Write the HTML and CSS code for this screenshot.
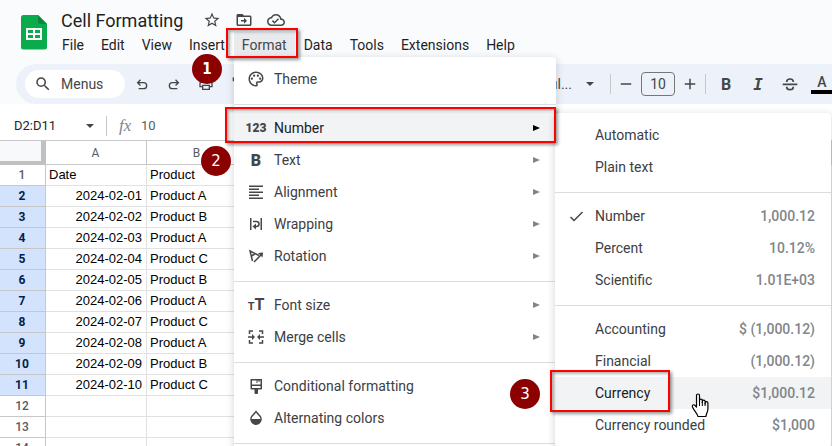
FILE: index.html
```html
<!DOCTYPE html>
<html lang="en">
<head>
  <meta charset="UTF-8">
  <meta name="viewport" content="width=device-width, initial-scale=1.0">
  <title>Cell Formatting</title>
  <link rel="stylesheet" href="styles.css">
</head>
<body>

  <!-- Header -->
  <header class="header">
    <svg class="logo" viewBox="0 0 26 35">
      <path fill="#0aab4c" d="M2.500 0H17l9 9v23a2.500 2.500 0 0 1-2.500 2.500h-21A2.500 2.500 0 0 1 0 32V2.500A2.500 2.500 0 0 1 2.500 0z"/>
      <path fill="#078a3c" d="M17 0l9 9h-6.500A2.500 2.500 0 0 1 17 6.500z"/>
      <path fill="#fff" fill-rule="evenodd" d="M5 13h16v12H5zM7 15v3h5v-3zM14 15v3h5v-3zM7 20v3h5v-3zM14 20v3h5v-3z"/>
    </svg>
    <div class="header-main">
      <div class="title-row">
        <h1>Cell Formatting</h1>
        <button class="title-button" aria-label="Star">
          <svg viewBox="0 0 24 24"><path d="M22 9.240l-7.190-.62L12 2 9.190 8.630 2 9.240l5.460 4.730L5.820 21 12 17.270 18.180 21l-1.630-7.030L22 9.240zM12 15.400l-3.760 2.270 1-4.280-3.320-2.880 4.380-.38L12 6.100l1.710 4.040 4.380.38-3.320 2.880 1 4.280L12 15.400z"/></svg>
        </button>
        <button class="title-button" aria-label="Move">
          <svg viewBox="0 0 24 24"><path d="M20 6h-8l-2-2H4c-1.100 0-2 .9-2 2v12c0 1.100.9 2 2 2h16c1.100 0 2-.9 2-2V8c0-1.100-.9-2-2-2zm0 12H4V8h16v10zM12 17l4-4-4-4v3H8v2h4z"/></svg>
        </button>
        <button class="title-button" aria-label="Document status">
          <svg viewBox="0 0 24 24"><path d="M19.350 10.040C18.670 6.590 15.640 4 12 4 9.110 4 6.610 5.640 5.350 8.040 2.340 8.360 0 10.910 0 14c0 3.310 2.690 6 6 6h13c2.760 0 5-2.240 5-5 0-2.640-2.050-4.780-4.650-4.960zM19 18H6c-2.210 0-4-1.790-4-4 0-2.050 1.530-3.760 3.560-3.970l1.070-.11.5-.95C8.080 7.140 9.940 6 12 6c2.620 0 4.880 1.860 5.390 4.430l.3 1.500 1.530.11c1.560.1 2.780 1.410 2.780 2.960 0 1.650-1.350 3-3 3zm-9-3.820l-2.090-2.090L6.500 13.500 10 17l6.010-6.010-1.410-1.410z"/></svg>
        </button>
      </div>
      <nav class="menu-bar">
        <button>File</button>
        <button>Edit</button>
        <button>View</button>
        <button>Insert</button>
        <button class="open">Format</button>
        <button>Data</button>
        <button>Tools</button>
        <button>Extensions</button>
        <button>Help</button>
      </nav>
    </div>
  </header>

  <!-- Toolbar -->
  <div class="toolbar">
    <label class="search">
      <svg class="icon" viewBox="0 0 24 24"><path d="M15.500 14h-.79l-.28-.27A6.470 6.470 0 0 0 16 9.500 6.500 6.500 0 1 0 9.500 16c1.610 0 3.090-.59 4.230-1.570l.27.28v.79l5 4.990L20.490 19l-4.990-5zm-6 0C7.010 14 5 11.990 5 9.500S7.010 5 9.500 5 14 7.010 14 9.500 11.990 14 9.500 14z"/></svg>
      <input type="text" placeholder="Menus" aria-label="Search the menus">
    </label>
    <div class="tool-group">
      <button class="tool" aria-label="Undo"><svg class="icon" viewBox="0 0 24 24"><path d="M7 20v-2h7.500a3.500 3.500 0 0 0 0-7H7.830l2.580 2.590L9 15l-5-5 5-5 1.410 1.410L7.830 9h6.670a5.500 5.500 0 0 1 0 11z"/></svg></button>
      <button class="tool" aria-label="Redo"><svg class="icon" viewBox="0 0 24 24"><path d="M17 20v-2H9.500a3.500 3.500 0 0 1 0-7h6.670l-2.580 2.590L15 15l5-5-5-5-1.410 1.410L16.170 9H9.500a5.500 5.500 0 0 0 0 11z"/></svg></button>
      <button class="tool" aria-label="Print"><svg class="icon" viewBox="0 0 24 24"><path d="M19 8h-1V3H6v5H5c-1.660 0-3 1.340-3 3v6h4v4h12v-4h4v-6c0-1.660-1.340-3-3-3zM8 5h8v3H8V5zm8 14H8v-4h8v4zm2-4v-2H6v2H4v-4c0-.55.450-1 1-1h14c.55 0 1 .450 1 1v4h-2z"/></svg></button>
      <button class="tool" aria-label="Paint format"><svg class="icon" viewBox="0 0 24 24"><path d="M18 4V3a1 1 0 0 0-1-1H5a1 1 0 0 0-1 1v4a1 1 0 0 0 1 1h12a1 1 0 0 0 1-1V6h1v4H9v11a1 1 0 0 0 1 1h2a1 1 0 0 0 1-1v-9h8V4zM6 4h10v2H6z"/></svg></button>
    </div>
    <div class="tool-group format-tools">
      <button class="font-name">Defaul...<span class="caret"></span></button>
      <span class="divider"></span>
      <button class="step" aria-label="Decrease font size"><svg class="icon" viewBox="0 0 24 24"><path d="M5 11h14v2H5z"/></svg></button>
      <input class="font-size" type="text" value="10" aria-label="Font size">
      <button class="step" aria-label="Increase font size"><svg class="icon" viewBox="0 0 24 24"><path d="M11 5h2v6h6v2h-6v6h-2v-6H5v-2h6z"/></svg></button>
      <span class="divider"></span>
      <button class="tool bold">B</button>
      <button class="tool italic">I</button>
      <button class="tool" aria-label="Strikethrough"><svg class="icon" viewBox="0 0 24 24"><path fill="none" stroke="#444746" stroke-width="2.500" d="M1 12.500h22M17 9c0-3-2-4.500-5-4.500S7 6 7 9M7 16c0 2.500 2 4.500 5 4.500s5-2 5-4.500"/></svg></button>
      <button class="tool text-color">A</button>
    </div>
  </div>

  <!-- Name box and formula bar -->
  <div class="formula-bar">
    <input class="name-box" type="text" value="D2:D11" aria-label="Name box">
    <span class="caret"></span>
    <span class="divider"></span>
    <span class="fx">fx</span>
    <input class="formula" type="text" value="10" aria-label="Formula">
  </div>

  <!-- Sheet -->
  <table class="sheet">
    <colgroup>
      <col class="col-number">
      <col class="col-cell">
      <col class="col-cell">
      <col>
    </colgroup>
    <thead>
      <tr><th class="corner"></th><th>A</th><th>B</th><th></th></tr>
    </thead>
    <tbody>
      <tr><th>1</th><td>Date</td><td>Product</td><td></td></tr>
      <tr class="selected"><th>2</th><td class="date">2024-02-01</td><td>Product A</td><td></td></tr>
      <tr class="selected"><th>3</th><td class="date">2024-02-02</td><td>Product B</td><td></td></tr>
      <tr class="selected"><th>4</th><td class="date">2024-02-03</td><td>Product A</td><td></td></tr>
      <tr class="selected"><th>5</th><td class="date">2024-02-04</td><td>Product C</td><td></td></tr>
      <tr class="selected"><th>6</th><td class="date">2024-02-05</td><td>Product B</td><td></td></tr>
      <tr class="selected"><th>7</th><td class="date">2024-02-06</td><td>Product A</td><td></td></tr>
      <tr class="selected"><th>8</th><td class="date">2024-02-07</td><td>Product C</td><td></td></tr>
      <tr class="selected"><th>9</th><td class="date">2024-02-08</td><td>Product A</td><td></td></tr>
      <tr class="selected"><th>10</th><td class="date">2024-02-09</td><td>Product B</td><td></td></tr>
      <tr class="selected"><th>11</th><td class="date">2024-02-10</td><td>Product C</td><td></td></tr>
      <tr><th>12</th><td></td><td></td><td></td></tr>
      <tr><th>13</th><td></td><td></td><td></td></tr>
      <tr><th>14</th><td></td><td></td><td></td></tr>
    </tbody>
  </table>

  <!-- Format menu -->
  <div class="menu format-menu">
    <button class="item">
      <svg class="icon" viewBox="0 0 24 24"><path d="M12 22C6.490 22 2 17.510 2 12S6.490 2 12 2s10 4.040 10 9c0 3.310-2.690 6-6 6h-1.770c-.28 0-.5.220-.5.5 0 .12.050.230.130.330.410.470.640 1.060.640 1.670A2.500 2.500 0 0 1 12 22zm0-18c-4.410 0-8 3.590-8 8s3.590 8 8 8c.28 0 .5-.22.5-.5a.54.540 0 0 0-.14-.35c-.41-.46-.63-1.050-.63-1.650a2.500 2.500 0 0 1 2.500-2.500H16c2.210 0 4-1.790 4-4 0-3.860-3.590-7-8-7z"/><circle cx="6.500" cy="11.500" r="1.500"/><circle cx="9.500" cy="7.500" r="1.500"/><circle cx="14.500" cy="7.500" r="1.500"/><circle cx="17.500" cy="11.500" r="1.500"/></svg>
      Theme
    </button>
    <hr>
    <button class="item active"><span class="icon digits">123</span>Number<span class="arrow"></span></button>
    <button class="item"><span class="icon letter">B</span>Text<span class="arrow"></span></button>
    <button class="item">
      <svg class="icon" viewBox="0 0 18 18"><path d="M2 2.500h14V4H2zM2 5.500h10V7H2zM2 8.500h14V10H2zM2 11.500h10V13H2zM2 14.500h14V16H2z"/></svg>
      Alignment<span class="arrow"></span>
    </button>
    <button class="item">
      <svg class="icon" viewBox="0 0 18 18"><path d="M3 3h1.500v12H3zM13.500 3H15v12h-1.500z"/><path fill="none" stroke="#444746" stroke-width="1.500" d="M6 6.500h3.500a2.500 2.500 0 0 1 0 5H8"/><path d="M5.500 11.500L9 8.500v6z"/></svg>
      Wrapping<span class="arrow"></span>
    </button>
    <button class="item">
      <svg class="icon" viewBox="0 0 18 18"><path fill="none" stroke="#444746" stroke-width="1.500" d="M5.500 14L3 4l9 4.500M4.500 9l4-2.500M7 15l7.500-7.500"/><path d="M11 6l5-.5-.5 5z"/></svg>
      Rotation<span class="arrow"></span>
    </button>
    <hr>
    <button class="item">
      <span class="icon sizes"><small>T</small>T</span>
      Font size<span class="arrow"></span>
    </button>
    <button class="item">
      <svg class="icon" viewBox="0 0 18 18"><path fill="none" stroke="#444746" stroke-width="1.500" d="M6 3H2.500v3M2.500 12v3H6M12 3h3.500v3M15.500 12v3H12M1 9h5M17 9h-5"/><path d="M5 6l3 3-3 3zM13 6l-3 3 3 3z"/></svg>
      Merge cells<span class="arrow"></span>
    </button>
    <hr>
    <button class="item">
      <svg class="icon" viewBox="0 0 18 18"><path fill-rule="evenodd" d="M4 2h11v9.500a1 1 0 0 1-1 1h-3V16a1 1 0 0 1-1 1H8.500a1 1 0 0 1-1-1v-3.500H4.500a1 1 0 0 1-1-1V2zM5 3.500v4h8.500v-4h-1V5h-1V3.500h-1V6h-1V3.500zM5 9v2h8.500V9z"/></svg>
      Conditional formatting
    </button>
    <button class="item">
      <svg class="icon" viewBox="0 0 18 18"><path fill-rule="evenodd" d="M9 1.500l4.200 4.700a5.800 5.800 0 1 1-8.400 0zM9 3.800L5.900 7.200A4.500 4.500 0 0 0 4.500 10h9a4.500 4.500 0 0 0-1.400-2.800z"/></svg>
      Alternating colors
    </button>
    <hr>
  </div>

  <!-- Number submenu -->
  <div class="menu number-menu">
    <button class="item"><span class="icon"></span>Automatic</button>
    <button class="item"><span class="icon"></span>Plain text</button>
    <hr>
    <button class="item">
      <svg class="icon" viewBox="0 0 18 18"><path fill="none" stroke="#444746" stroke-width="1.500" d="M2.500 10l3.500 3.500L14.500 5"/></svg>
      Number<span class="sample">1,000.12</span>
    </button>
    <button class="item"><span class="icon"></span>Percent<span class="sample">10.12%</span></button>
    <button class="item"><span class="icon"></span>Scientific<span class="sample">1.01E+03</span></button>
    <hr>
    <button class="item"><span class="icon"></span>Accounting<span class="sample">$ (1,000.12)</span></button>
    <button class="item"><span class="icon"></span>Financial<span class="sample">(1,000.12)</span></button>
    <button class="item active"><span class="icon"></span>Currency<span class="sample">$1,000.12</span></button>
    <button class="item"><span class="icon"></span>Currency rounded<span class="sample">$1,000</span></button>
  </div>

  <!-- Step markers -->
  <div class="frame frame-format"></div>
  <div class="frame frame-number"></div>
  <div class="frame frame-currency"></div>
  <div class="step-mark mark-1">1</div>
  <div class="step-mark mark-2">2</div>
  <div class="step-mark mark-3">3</div>

  <svg class="pointer" viewBox="0 0 18 25">
    <path fill="#fff" stroke="#000" stroke-width="1.200" stroke-linejoin="round" d="M5.500 14V2.500a1.500 1.500 0 0 1 3 0V9V7.500a1.400 1.400 0 0 1 2.800 0V9.500V8.500a1.400 1.400 0 0 1 2.800 0V11V10a1.400 1.400 0 0 1 2.800 0v6c0 3-1.500 4-2 7.500H7c-.5-3-3.500-5-5.500-9.500-.8-2 1.200-3 2.500-1.500z"/>
    <path fill="none" stroke="#000" d="M8.500 8v5M11.300 9v4M14.100 10v3"/>
  </svg>

</body>
</html>
```
FILE: styles.css
```css
* {
  box-sizing: border-box;
}

body {
  position: relative;
  height: 100vh;
  margin: 0;
  overflow: hidden;
  background-color: #f9fbfd;
  color: #1f1f1f;
  font-family: Roboto, Arial, sans-serif;
  font-size: 14px;
}

button,
input {
  margin: 0;
  padding: 0;
  border: none;
  background: none;
  color: inherit;
  font: inherit;
}

button {
  cursor: pointer;
}

input {
  min-width: 0;
  outline: none;
}

svg {
  display: block;
  fill: #444746;
}

.icon {
  flex: none;
  width: 18px;
  height: 18px;
}

.caret {
  flex: none;
  border: 4px solid transparent;
  border-top-color: #444746;
  border-bottom: none;
}

.divider {
  flex: none;
  width: 1px;
  height: 20px;
  background-color: #c7c7c7;
}

/* Header */
.header {
  display: flex;
  gap: 7px;
  height: 64px;
  padding: 8px 0 0 21px;
}

.logo {
  flex: none;
  width: 26px;
  height: 35px;
  margin-top: 7px;
}

.title-row {
  display: flex;
  align-items: center;
  gap: 12px;
  height: 24px;
  padding-left: 7px;
}

h1 {
  margin: 0 7px 0 0;
  font-size: 18px;
  font-weight: 400;
}

.title-button svg {
  width: 20px;
  height: 18px;
}

.menu-bar {
  display: flex;
  gap: 1px;
}

.menu-bar button {
  height: 26px;
  padding: 0 8px;
  font-size: 14px;
}

.menu-bar .open {
  background-color: #e8eaed;
  color: #444746;
}

/* Toolbar */
.toolbar {
  display: flex;
  align-items: center;
  gap: 1px;
  height: 40px;
  margin-left: 16px;
  padding-left: 9px;
  border-radius: 20px 0 0 20px;
  background-color: #edf2fa;
  color: #444746;
}

.search {
  display: flex;
  align-items: center;
  gap: 9px;
  width: 100px;
  height: 28px;
  padding: 0 9px;
  border-radius: 14px;
  background-color: #fff;
}

.search input {
  width: 56px;
}

.search input::placeholder {
  color: #444746;
  opacity: 1;
}

.tool-group {
  display: flex;
  align-items: center;
}

.format-tools {
  margin-left: auto;
  margin-right: -6px;
}

.tool {
  display: flex;
  align-items: center;
  justify-content: center;
  width: 32px;
  height: 28px;
}

.tool .icon {
  width: 16px;
  height: 16px;
}

.font-name {
  display: flex;
  align-items: center;
  gap: 14px;
  margin-right: 16px;
}

.step {
  margin: 0 6px;
}

.font-size {
  width: 34px;
  height: 24px;
  border: 1px solid #747775;
  border-radius: 4px;
  text-align: center;
}

.format-tools .divider:nth-of-type(2) {
  margin-right: 4px;
}

.bold,
.italic {
  font-size: 16px;
  font-weight: 700;
}

.italic {
  font-family: "DejaVu Sans Mono", monospace;
  font-style: italic;
}

.text-color {
  width: 22px;
  height: 20px;
  margin: 0 5px;
  border-bottom: 4px solid #000;
  font-weight: 500;
}

/* Formula bar */
.formula-bar {
  display: flex;
  align-items: center;
  height: 37px;
  padding: 7px 0 0 14px;
  border-bottom: 1px solid #c7c7c7;
  background-color: #fff;
  font-size: 13px;
}

.name-box {
  width: 72px;
}

.formula-bar .divider {
  margin: 0 12px;
}

.fx {
  width: 22px;
  color: #80868b;
  font-family: "Liberation Serif", serif;
  font-size: 17px;
  font-style: italic;
}

.formula {
  flex: 1;
  color: #575b5f;
}

/* Sheet */
.sheet {
  width: 100%;
  border-collapse: separate;
  border-spacing: 0;
  table-layout: fixed;
  background-color: #fff;
}

.col-number {
  width: 46px;
}

.col-cell {
  width: 101px;
}

.sheet th,
.sheet td {
  height: 21px;
  padding: 0 4px 0 3px;
  border-right: 1px solid #e1e1e1;
  border-bottom: 1px solid #e1e1e1;
  line-height: 20px;
}

.sheet th {
  border-color: #c7c7c7;
  color: #575b5f;
  font-size: 12px;
  font-weight: 400;
}

.sheet tbody th {
  font-weight: 500;
}

.sheet thead th {
  height: 24px;
}

.sheet .corner {
  border-right: 5px solid #c0c0c0;
  border-bottom: 4px solid #c0c0c0;
  background-color: #f8f9fa;
}

.sheet td {
  color: #000;
  font-family: "Liberation Sans", Arial, sans-serif;
  font-size: 13px;
}

.sheet .date {
  text-align: right;
}

.sheet .selected th {
  background-color: #d3e3fd;
  color: #041e49;
  font-weight: 700;
}

/* Menus */
.menu {
  position: absolute;
  padding: 6px 0;
  border-radius: 4px;
  background-color: #fff;
  box-shadow: 0 2px 6px 2px rgba(60, 64, 67, 0.15);
}

.format-menu {
  top: 57px;
  left: 234px;
  width: 322px;
}

.number-menu {
  top: 113px;
  left: 555px;
  width: 276px;
}

.menu hr {
  height: 1px;
  margin: 9px 0 7px;
  border: none;
  background-color: #dadce0;
}

.item {
  display: flex;
  align-items: center;
  gap: 9px;
  width: 100%;
  height: 32px;
  padding: 0 16px 0 13px;
  color: #3c4043;
  text-align: left;
}

.item.active {
  background-color: #f1f3f4;
  color: #202124;
}

.arrow {
  margin-left: auto;
  border: 3px solid transparent;
  border-left: 7px solid #80868b;
  border-right: none;
}

.active .arrow {
  border-left-color: #000;
}

.sample {
  margin-left: auto;
  color: #80868b;
  font-weight: 500;
}

.digits,
.letter,
.sizes {
  display: flex;
  align-items: center;
  justify-content: center;
  color: #444746;
  font-weight: 900;
}

.digits {
  font-size: 12px;
}

.letter {
  font-size: 16px;
}

.sizes {
  align-items: baseline;
  font-size: 16px;
  font-weight: 700;
  line-height: 18px;
}

.sizes small {
  font-size: 11px;
}

/* Step markers */
.frame {
  position: absolute;
  border: 2px solid #f00;
  box-shadow: 2px 2px 3px rgba(0, 0, 0, 0.4), inset 2px 2px 3px rgba(0, 0, 0, 0.3);
}

.frame-format {
  top: 28px;
  left: 226px;
  width: 72px;
  height: 30px;
}

.frame-number {
  top: 107px;
  left: 225px;
  width: 331px;
  height: 36px;
}

.frame-currency {
  top: 370px;
  left: 550px;
  width: 120px;
  height: 42px;
}

.step-mark {
  position: absolute;
  width: 30px;
  height: 30px;
  border-radius: 50%;
  background-color: #8b0000;
  color: #fff;
  font-family: "DejaVu Sans", sans-serif;
  font-size: 15px;
  line-height: 30px;
  text-align: center;
}

.mark-1 {
  top: 54px;
  left: 192px;
  font-family: "DejaVu Sans Condensed", "DejaVu Sans", sans-serif;
  font-weight: 700;
}

.mark-2 {
  top: 146px;
  left: 201px;
}

.mark-3 {
  top: 379px;
  left: 510px;
}

.pointer {
  position: absolute;
  top: 393px;
  left: 691px;
  width: 18px;
  height: 25px;
}
```
